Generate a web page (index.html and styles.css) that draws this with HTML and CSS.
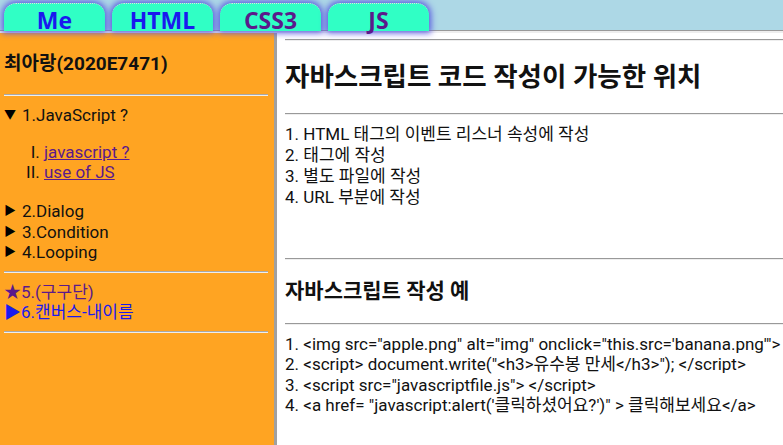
FILE: index.html
```html
<!DOCTYPE html>
<html>
<head>
    <title>자바스크립트</title>
    <link rel="stylesheet" href="styles.css">
</head>
<body>
    <div class="top-bar">
        <a class="tab" href="#">Me</a>
        <a class="tab" href="#">HTML</a>
        <a class="tab visited" href="#">CSS3</a>
        <a class="tab visited" href="#">JS</a>
    </div>
    <div class="frame-row">
        <div class="side-menu">
            <h3 class="name-title">최아랑(2020E7471)</h3>
            <hr class="line first">
            <div class="menu-item open"><span class="mark">▼</span>1.JavaScript ?</div>
            <ol class="sub-list">
                <li><a href="#">javascript ?</a></li>
                <li><a href="#">use of JS</a></li>
            </ol>
            <div class="menu-item"><span class="mark">▶</span>2.Dialog</div>
            <div class="menu-item"><span class="mark">▶</span>3.Condition</div>
            <div class="menu-item"><span class="mark">▶</span>4.Looping</div>
            <hr class="line second">
            <a class="extra visited" href="#">★5.(구구단)</a>
            <a class="extra" href="#">▶6.캔버스-내이름</a>
            <hr class="line third">
        </div>
        <div class="main-view">
            <hr class="rule top">
            <h2 class="big-title">자바스크립트 코드 작성이 가능한 위치</h2>
            <hr class="rule">
            <p class="text-lines">
                1. HTML 태그의 이벤트 리스너 속성에 작성<br>
                2. 태그에 작성<br>
                3. 별도 파일에 작성<br>
                4. URL 부분에 작성
            </p>
            <hr class="rule gap">
            <h3 class="small-title">자바스크립트 작성 예</h3>
            <hr class="rule after-small">
            <p class="text-lines code">
                1. &lt;img src="apple.png" alt="img" onclick="this.src='banana.png'"&gt;<br>
                2. &lt;script&gt; document.write("&lt;h3&gt;유수봉 만세&lt;/h3&gt;"); &lt;/script&gt;<br>
                3. &lt;script src="javascriptfile.js"&gt; &lt;/script&gt;<br>
                4. &lt;a href= "javascript:alert('클릭하셨어요?')" &gt; 클릭해보세요&lt;/a&gt;
            </p>
        </div>
    </div>
</body>
</html>
```

FILE: styles.css
```css
/* layout giống frameset */
html, body {
    margin: 0;
    padding: 0;
    height: 100%;
    overflow: hidden;
}

body {
    font-family: Roboto, "Noto Sans CJK KR", sans-serif;
    font-size: 17px;
    color: #111;
    display: flex;
    flex-direction: column;
}

.top-bar {
    height: 30px;
    background-color: #add8e6;
    border-bottom: 1px solid #999;
    display: flex;
    align-items: flex-end;
    gap: 7px;
    padding-left: 4px;
    flex-shrink: 0;
}

.tab {
    width: 101px;
    height: 25px;
    padding-top: 2px;
    margin-bottom: -1px;
    background-color: #30ffc5;
    border-top: 1px dotted #ddd;
    border-radius: 12px 12px 0 0;
    box-shadow: 0 0 6px 2px #5a5ae0;
    color: #1a1aee;
    font-family: "Open Sans", sans-serif;
    font-weight: bold;
    font-size: 23px;
    line-height: 28px;
    text-align: center;
    text-decoration: none;
    position: relative;
    z-index: 1;
}

.tab.visited {
    color: #5b1a8b;
}

.frame-row {
    flex: 1;
    display: flex;
    border-top: 2px solid #eee;
}

.side-menu {
    width: 277px;
    background-color: #ffa422;
    border-right: 3px solid #a0a0a0;
    padding: 0 6px 0 4px;
    box-sizing: border-box;
    line-height: 20px;
    flex-shrink: 0;
}

.name-title {
    margin: 19px 0 0 0;
    font-size: 19px;
    line-height: 24px;
}

.line {
    border: none;
    border-top: 1px solid #a8a8a8;
    border-bottom: 1px solid #eee;
    margin: 0;
}

.line.first {
    margin-top: 18px;
}

.line.second {
    margin-top: 8px;
}

.line.third {
    margin-top: 9px;
}

.menu-item {
    display: flex;
    align-items: center;
    height: 20.5px;
}

.menu-item .mark {
    width: 18px;
    font-size: 12px;
    line-height: 1;
    color: #000;
}

.menu-item.open {
    margin-top: 8px;
    height: 21px;
}

.sub-list {
    list-style-type: upper-roman;
    margin: 17px 0 19px 0;
    padding-left: 40px;
}

.sub-list a {
    color: #5b1a8b;
}

.extra {
    display: block;
    text-decoration: none;
    color: #1a1aee;
}

.extra.visited {
    color: #5b1a8b;
    margin-top: 9px;
}

.main-view {
    flex: 1;
    padding-left: 8px;
    background: #fff;
}

.rule {
    border: none;
    border-top: 1px solid #999;
    border-bottom: 1px solid #eee;
    margin: 22px 0 0 0;
}

.rule.top {
    margin-top: 6px;
}

.rule.gap {
    margin-top: 50px;
}

.rule.after-small {
    margin-top: 20px;
}

.big-title {
    margin: 22px 0 0 0;
    font-size: 26.5px;
    line-height: 28px;
}

.small-title {
    margin: 19px 0 0 0;
    font-size: 21px;
    line-height: 24px;
}

.text-lines {
    margin: 9px 0 0 0;
    line-height: 21px;
    white-space: nowrap;
}

.text-lines.code {
    margin-top: 9px;
    line-height: 20.3px;
}
```
